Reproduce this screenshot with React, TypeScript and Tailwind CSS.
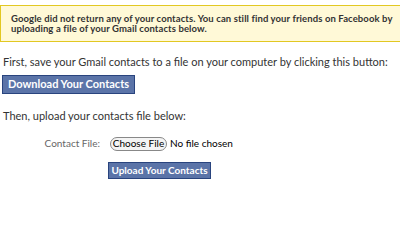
export default function App() {
  return (
    <div className="h-[200px] w-[400px] overflow-hidden bg-white font-['Lato',sans-serif] text-[#333333]">
      <div className="mt-[5px] w-[420px] border border-[#e2c822] bg-[#fff9d7] px-[10px] pt-[8px] pb-[7px] text-[9.5px] leading-[10px] font-bold">
        <p className="whitespace-nowrap tracking-[0.1px]">
          Google did not return any of your contacts. You can still find your friends on Facebook by
        </p>
        <p className="whitespace-nowrap tracking-[0.1px]">uploading a file of your Gmail contacts below.</p>
      </div>
      <p className="mt-[14px] pl-[3px] text-[11px] leading-[12px]">
        First, save your Gmail contacts to a file on your computer by clicking this button:
      </p>
      <button className="mt-[7px] ml-[2px] h-[19px] w-[133px] border border-[#29447e] bg-[#5b74a8] text-[11px] font-bold text-white">
        Download Your Contacts
      </button>
      <p className="mt-[16px] pl-[3px] text-[11px] leading-[12px]">Then, upload your contacts file below:</p>
      <div className="mt-[14px] flex items-center">
        <span className="w-[110px] pr-[10px] text-right text-[10px] text-[#666666]">Contact File:</span>
        <span className="flex h-[14px] w-[57px] items-center justify-center rounded-full border border-[#888888] bg-[#f4f4f4] text-[10px] text-black">
          Choose File
        </span>
        <span className="ml-[3px] text-[10px] text-black">No file chosen</span>
      </div>
      <button className="mt-[11px] ml-[108px] h-[17px] w-[103px] border border-[#29447e] bg-[#5b74a8] text-[10px] font-bold text-white">
        Upload Your Contacts
      </button>
    </div>
  );
}
